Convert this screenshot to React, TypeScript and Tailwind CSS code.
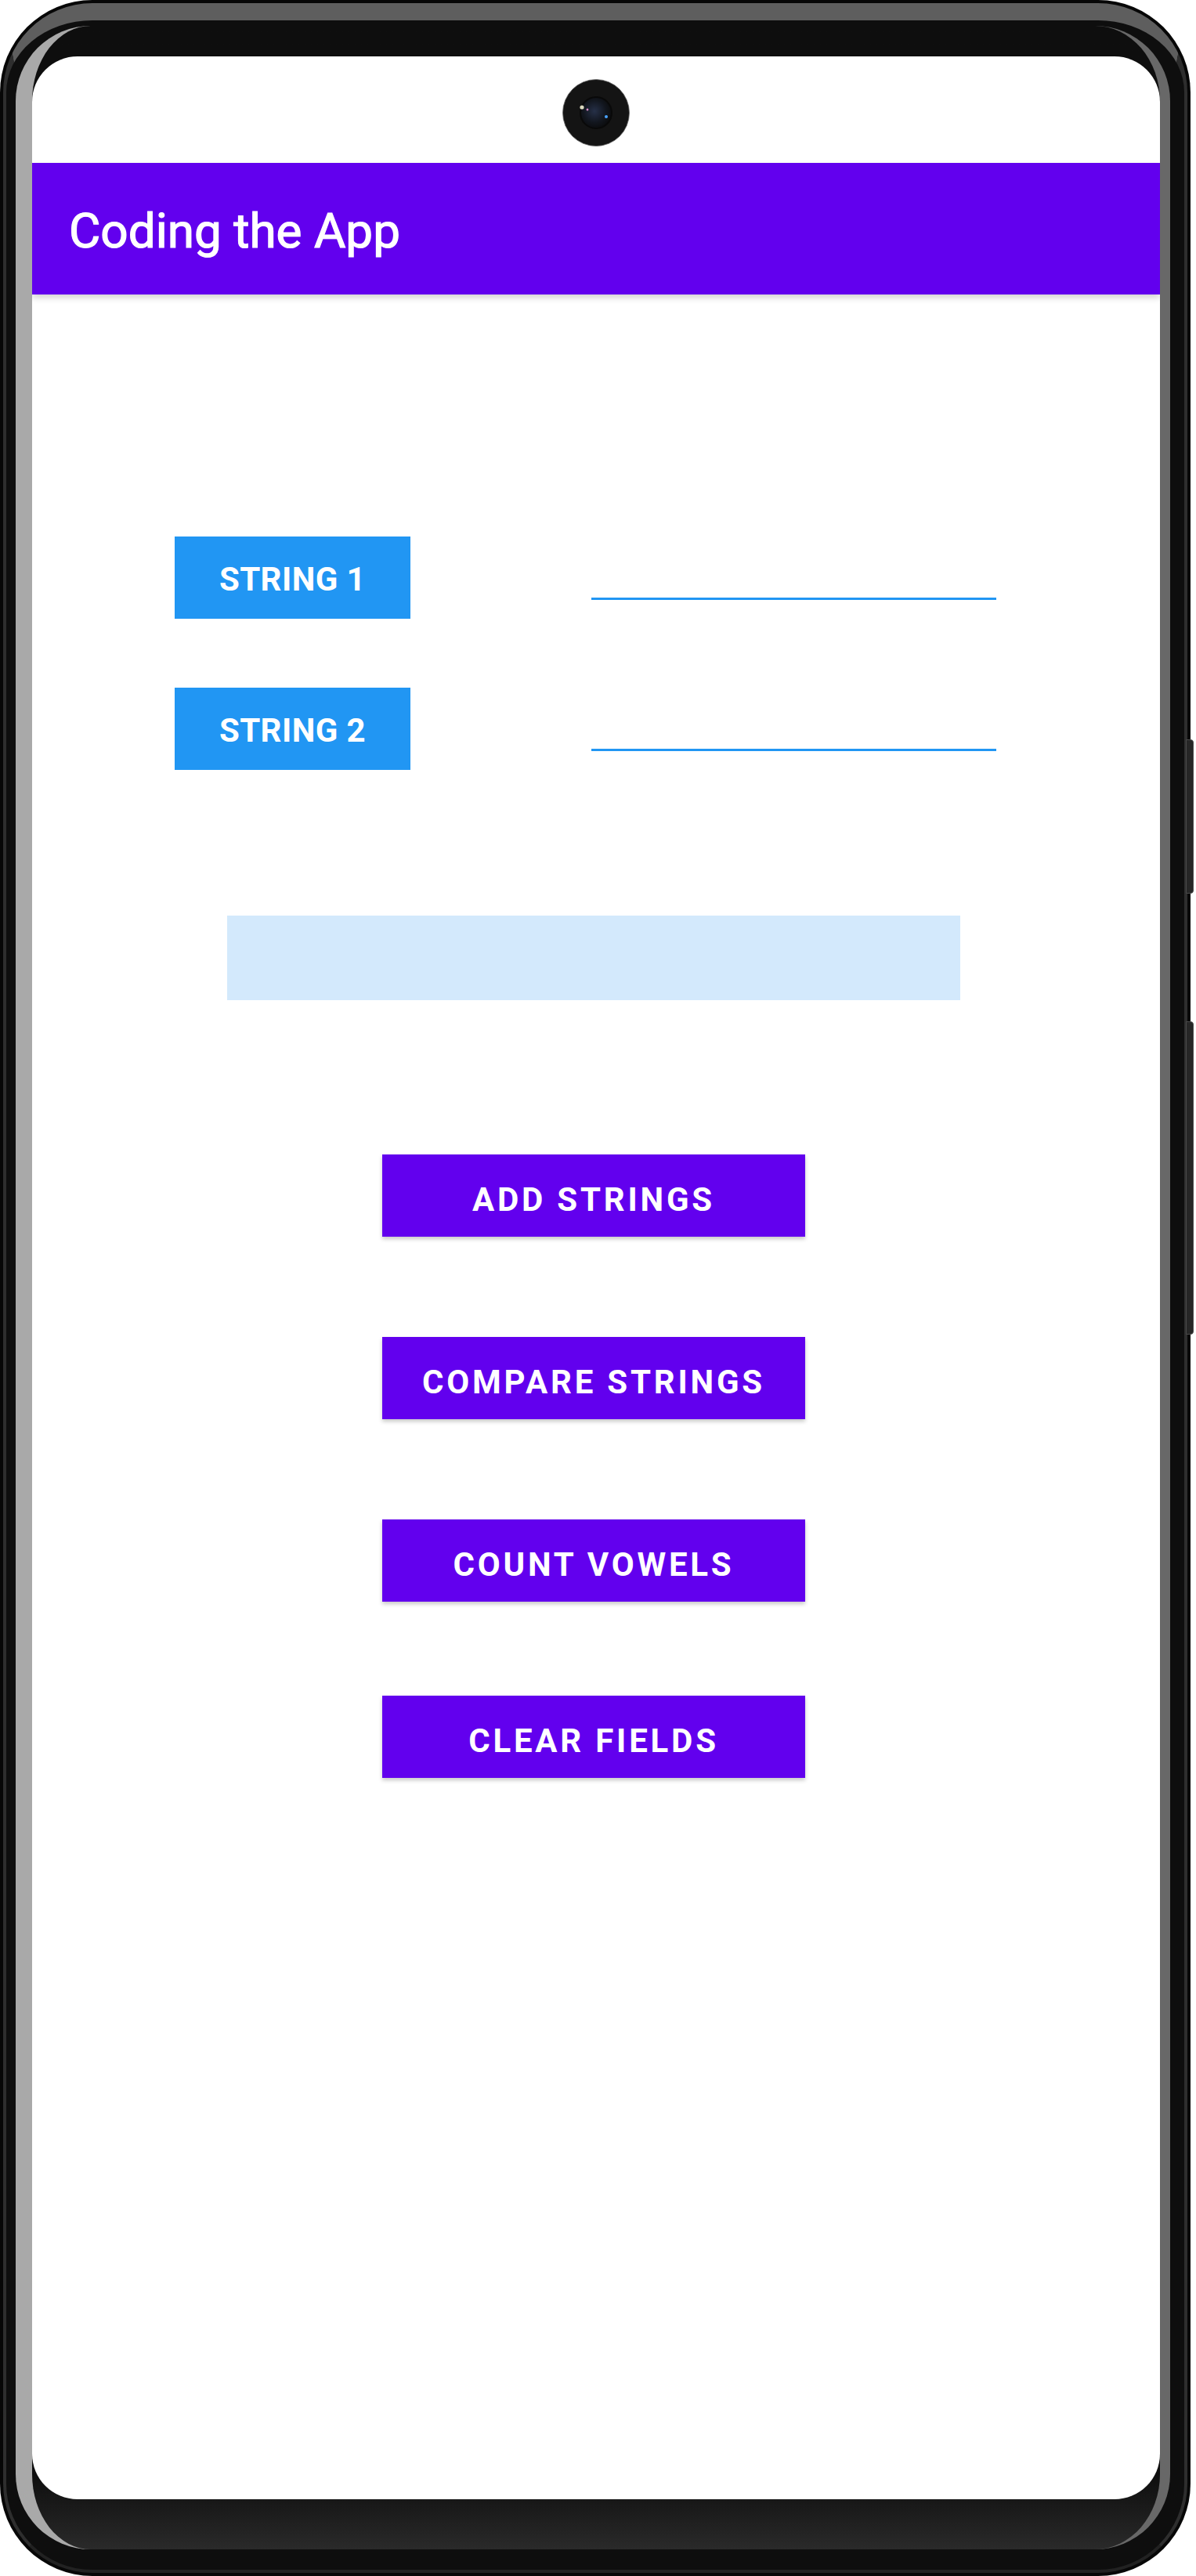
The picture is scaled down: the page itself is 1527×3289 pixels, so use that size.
import React from "react";

const STRING_ROWS = ["STRING 1", "STRING 2"];

const ACTIONS = [
  { label: "ADD STRINGS", gap: "mt-[197px]" },
  { label: "COMPARE STRINGS", gap: "mt-[128px]" },
  { label: "COUNT VOWELS", gap: "mt-[128px]" },
  { label: "CLEAR FIELDS", gap: "mt-[120px]" },
];

const Camera = () => (
  <svg width="86" height="86" viewBox="0 0 86 86">
    <defs>
      <radialGradient id="lens" cx="45%" cy="45%" r="60%">
        <stop offset="0" stopColor="#263048" />
        <stop offset="0.6" stopColor="#12161e" />
        <stop offset="1" stopColor="#0a0a0a" />
      </radialGradient>
    </defs>
    <circle cx="43" cy="43" r="42.5" fill="#141414" stroke="#6a6a6a" strokeWidth="0.8" />
    <circle cx="43" cy="43" r="20" fill="url(#lens)" stroke="#090909" strokeWidth="2" />
    <circle cx="25" cy="36" r="2.6" fill="#f2efd2" opacity="0.9" />
    <circle cx="32" cy="39" r="1.4" fill="#d68ac4" />
    <circle cx="56" cy="48" r="2" fill="#4aa3ff" />
  </svg>
);

const StringRow = ({ label, first }: { label: string; first: boolean }) => (
  <div className={`flex ${first ? "mt-[309px]" : "mt-[88px]"}`}>
    <div className="ml-[182px] w-[301px] h-[105px] bg-[#2196f3] flex items-center justify-center pt-[4px] text-white text-[42px] font-bold tracking-[0.01em]">
      {label}
    </div>
    <div className="ml-[231px] mt-[78px] w-[517px] h-[3px] bg-[#2196f3]" />
  </div>
);

export default function App() {
  return (
    <div className="w-[1527px] h-[3289px] bg-white relative font-['Roboto',sans-serif]">
      {/* phone shell */}
      <div className="w-[1520px] h-[3289px] rounded-[118px] bg-[#070707] p-[4px] flex">
        <div className="flex-1 flex flex-col rounded-[114px] bg-[#0e0e0e] border-t-[22px] border-t-[#5e5e5e] border-x-[4px] border-x-[#2e2e2e] border-b-[4px] border-b-[#222]">
          <div className="mt-[7px] ml-[12px] mr-[18px] mb-[26px] flex-1 flex flex-col rounded-[96px] bg-gradient-to-b from-[#0e0e0e] via-[#0e0e0e] via-[97%] to-[#2a2a2a] border-l-[21px] border-l-[#a9a9a9] border-r-[13px] border-r-[#686868] pt-[39px] pb-[64px]">
            {/* screen */}
            <div className="w-[1440px] h-[3119px] bg-white rounded-[58px] overflow-hidden flex flex-col">
              <div className="h-[136px] flex justify-center pt-[29px]">
                <Camera />
              </div>
              <div className="h-[168px] bg-[#6200ee] flex items-center pl-[47px] pt-[6px] relative z-10 shadow-[0_4px_8px_rgba(0,0,0,0.18)]">
                <span className="text-white text-[62px] leading-none [-webkit-text-stroke:1.2px_#fff]">Coding the App</span>
              </div>
              <div className="flex flex-col">
                {STRING_ROWS.map((s, i) => (
                  <StringRow key={s} label={s} first={i === 0} />
                ))}
                <div className="mt-[186px] ml-[249px] w-[936px] h-[108px] bg-[#d3e9fc]" />
                {ACTIONS.map((a) => (
                  <div
                    key={a.label}
                    className={`${a.gap} ml-[447px] w-[540px] h-[105px] bg-[#6200ee] flex items-center justify-center pt-[10px] text-white text-[42px] font-bold tracking-[0.09em] shadow-[0_3px_5px_rgba(0,0,0,0.22)]`}
                  >
                    {a.label}
                  </div>
                ))}
              </div>
            </div>
          </div>
        </div>
      </div>
      {/* side keys */}
      <div className="absolute left-[1514px] top-[944px] w-[10px] h-[197px] rounded-r-[4px] bg-[#262626] border border-[#4a4a4a]" />
      <div className="absolute left-[1514px] top-[1304px] w-[10px] h-[400px] rounded-r-[4px] bg-[#262626] border border-[#4a4a4a]" />
    </div>
  );
}
